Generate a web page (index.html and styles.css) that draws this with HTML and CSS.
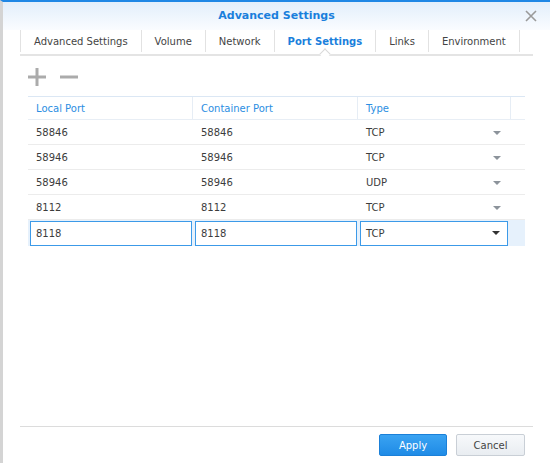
FILE: index.html
```html
<!DOCTYPE html>
<html lang="en">
<head>
    <meta charset="UTF-8">
    <title>Advanced Settings</title>
    <link rel="stylesheet" href="styles.css">
</head>
<body>
    <div class="dialog">
        <div class="titlebar">
            <span class="title">Advanced Settings</span>
            <svg class="close" width="12" height="12" viewBox="0 0 12 12">
                <path d="M1 1 L11 11 M11 1 L1 11" stroke="#9a9a9a" stroke-width="1.6" fill="none"/>
            </svg>
        </div>

        <div class="tabs">
            <div class="tab">Advanced Settings</div>
            <div class="tab">Volume</div>
            <div class="tab">Network</div>
            <div class="tab active">Port Settings</div>
            <div class="tab">Links</div>
            <div class="tab">Environment</div>
        </div>

        <div class="toolbar">
            <svg width="18" height="18" viewBox="0 0 18 18">
                <path d="M9 0 V18 M0 9 H18" stroke="#ababab" stroke-width="3" fill="none"/>
            </svg>
            <svg width="18" height="18" viewBox="0 0 18 18">
                <path d="M0 9 H18" stroke="#ababab" stroke-width="3" fill="none"/>
            </svg>
        </div>

        <div class="grid">
            <div class="row head">
                <div class="cell">Local Port</div>
                <div class="cell">Container Port</div>
                <div class="cell">Type</div>
                <div class="cell"></div>
            </div>
            <div class="row">
                <div class="cell">58846</div>
                <div class="cell">58846</div>
                <div class="cell">TCP<span class="arrow"></span></div>
                <div class="cell"></div>
            </div>
            <div class="row">
                <div class="cell">58946</div>
                <div class="cell">58946</div>
                <div class="cell">TCP<span class="arrow"></span></div>
                <div class="cell"></div>
            </div>
            <div class="row">
                <div class="cell">58946</div>
                <div class="cell">58946</div>
                <div class="cell">UDP<span class="arrow"></span></div>
                <div class="cell"></div>
            </div>
            <div class="row">
                <div class="cell">8112</div>
                <div class="cell">8112</div>
                <div class="cell">TCP<span class="arrow"></span></div>
                <div class="cell"></div>
            </div>
            <div class="row editing">
                <div class="cell"><div class="field">8118</div></div>
                <div class="cell"><div class="field">8118</div></div>
                <div class="cell"><div class="field select">TCP<span class="arrow dark"></span></div></div>
                <div class="cell"></div>
            </div>
        </div>

        <div class="spacer"></div>

        <div class="footer">
            <button class="btn apply">Apply</button>
            <button class="btn cancel">Cancel</button>
        </div>
    </div>
</body>
</html>
```

FILE: styles.css
```css
body {
    margin: 0;
    font-family: "DejaVu Sans", Verdana, sans-serif;
    font-size: 10px;
    color: #3c3c3c;
    background: #fff;
}
.dialog {
    width: 550px;
    height: 463px;
    box-sizing: border-box;
    border-top: 2px solid #1f87e5;
    border-left: 3px solid #d4d4d4;
    display: flex;
    flex-direction: column;
}
.titlebar {
    height: 28px;
    flex-shrink: 0;
    background: linear-gradient(#e2eefb, #fafcff);
    display: flex;
    align-items: center;
    justify-content: center;
    position: relative;
}
.title {
    font-weight: bold;
    font-size: 11px;
    color: #1a7fdc;
    margin-top: -1px;
}
.close {
    position: absolute;
    right: 13px;
    top: 8px;
}
.tabs {
    display: flex;
    margin: 0 17px;
    height: 26px;
    flex-shrink: 0;
    border-bottom: 2px solid #e4e4e4;
    box-sizing: border-box;
    padding-bottom: 2px;
}
.tab {
    height: 22px;
    line-height: 23px;
    padding: 0 13px;
    border-right: 1px solid #e2e2e2;
    color: #444;
    position: relative;
}
.tab:first-child {
    border-left: 1px solid #e2e2e2;
}
.tab.active {
    color: #1a7fdc;
    font-weight: bold;
}
.tab.active::after {
    content: "";
    position: absolute;
    left: 50%;
    bottom: -6px;
    width: 7px;
    height: 7px;
    margin-left: -4px;
    background: #fff;
    border-top: 1px solid #d8d8d8;
    border-left: 1px solid #d8d8d8;
    transform: rotate(45deg);
}
.toolbar {
    height: 40px;
    flex-shrink: 0;
    display: flex;
    align-items: center;
    gap: 14px;
    padding-left: 25px;
    padding-top: 1px;
    box-sizing: border-box;
}
.grid {
    margin-left: 25px;
    width: 497px;
    border-top: 1px solid #dbe7f4;
}
.row {
    display: grid;
    grid-template-columns: 165px 165px 153px 14px;
    height: 25px;
    padding-top: 1px;
    border-bottom: 1px solid #ececec;
    box-sizing: border-box;
}
.row.head {
    height: 23px;
    padding-top: 0;
    border-bottom-color: #e8eef5;
}
.row.head .cell {
    color: #2b8ee2;
    border-right: 1px solid #e6edf5;
}
.row.head .cell:last-child {
    border-right: none;
}
.cell {
    padding-left: 8px;
    display: flex;
    align-items: center;
    position: relative;
}
.arrow {
    position: absolute;
    right: 10px;
    top: 50%;
    margin-top: -2px;
    width: 0;
    height: 0;
    border-left: 4px solid transparent;
    border-right: 4px solid transparent;
    border-top: 4px solid #8c939b;
}
.arrow.dark {
    border-top-color: #333;
    right: 7px;
}
.row.editing {
    height: 26px;
    padding-top: 0;
    border-bottom: none;
    background: #e6f1fc;
}
.row.editing .cell {
    padding: 0 1px 0 2px;
}
.row.editing .cell:nth-child(3) {
    padding-right: 3px;
}
.field {
    flex: 1;
    height: 25px;
    box-sizing: border-box;
    border: 1px solid #3c9ae8;
    background: #fff;
    padding-left: 5px;
    display: flex;
    align-items: center;
    position: relative;
}
.spacer {
    flex: 1;
}
.footer {
    margin: 0 17px;
    border-top: 1px solid #dcdcdc;
    padding: 7px 8px 7px 0;
    display: flex;
    justify-content: flex-end;
    gap: 9px;
}
.btn {
    height: 22px;
    font-family: "DejaVu Sans", Verdana, sans-serif;
    font-size: 10px;
    border-radius: 2px;
    padding: 0;
}
.apply {
    width: 68px;
    color: #fff;
    border: 1px solid #1b80d8;
    background: linear-gradient(#3aa3f2, #1f8be6);
}
.cancel {
    width: 69px;
    color: #444;
    border: 1px solid #c9cfd6;
    background: linear-gradient(#f7f9fb, #e9edf1);
}
```
